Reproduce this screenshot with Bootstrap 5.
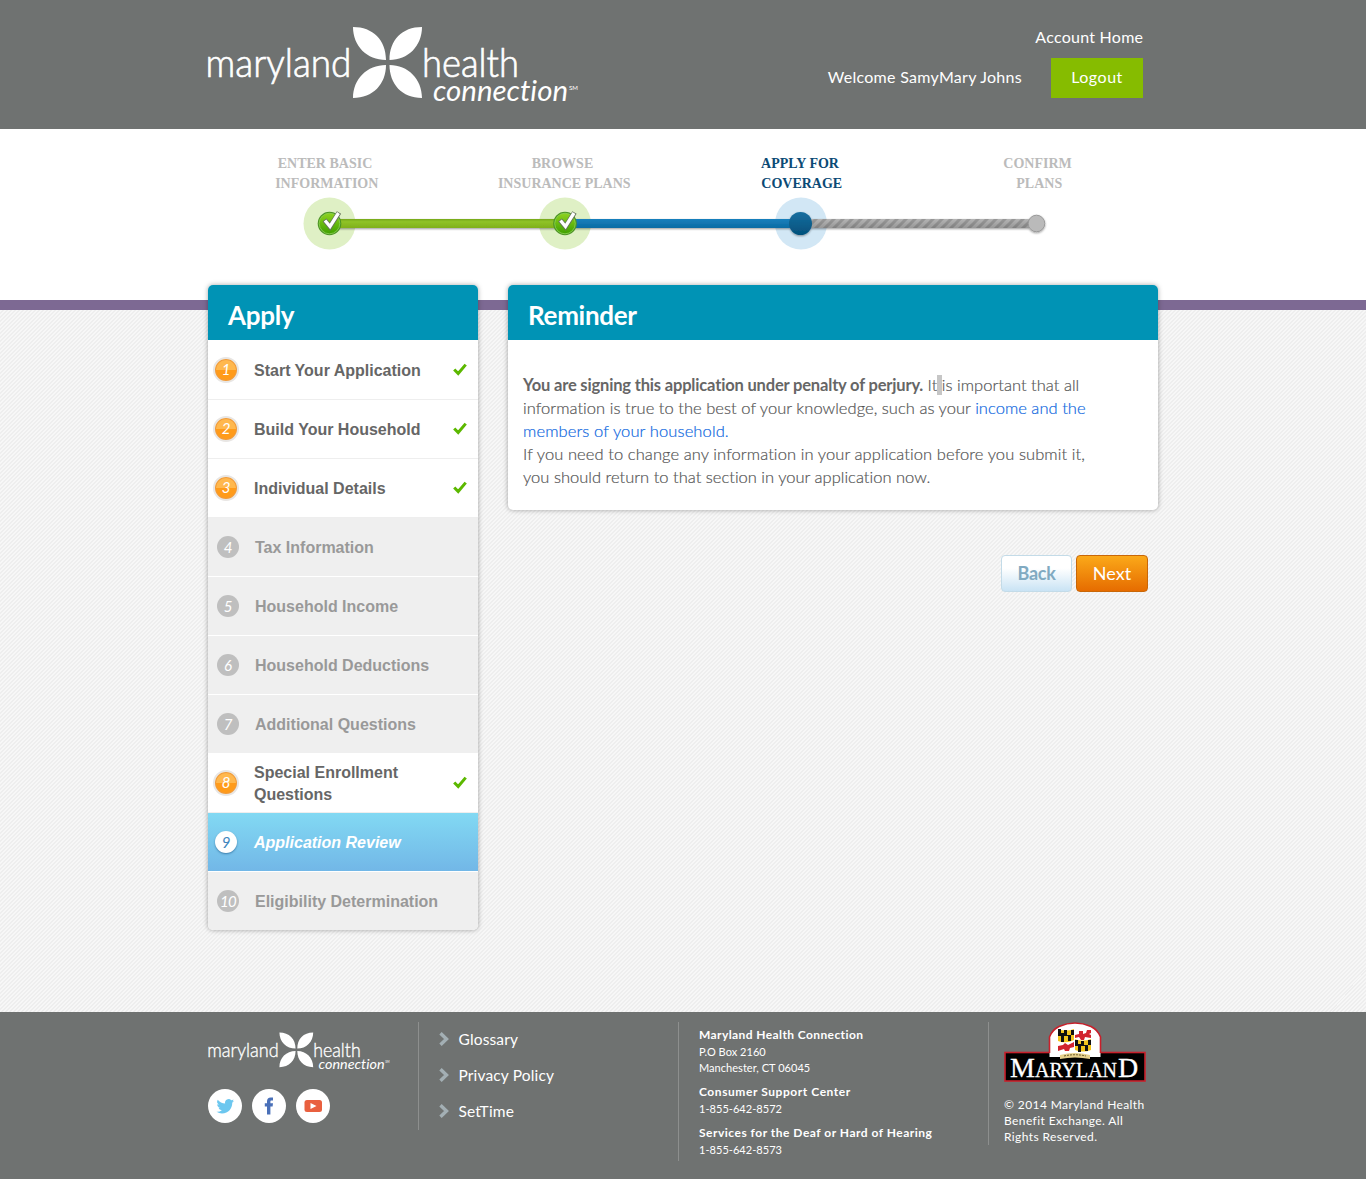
<!DOCTYPE html>
<html lang="en">
<head>
<meta charset="utf-8">
<meta name="viewport" content="width=device-width, initial-scale=1">
<title>Maryland Health Connection - Reminder</title>
<link href="https://cdn.jsdelivr.net/npm/bootstrap@5.3.0/dist/css/bootstrap.min.css" rel="stylesheet">
<style>
body{font-family:Lato,"Open Sans",sans-serif;color:#666;background:#fff;font-size:16px;font-variant-ligatures:none}
a{text-decoration:none}
.wrap{width:950px;margin:0 auto}
.site-head{background:#6f7271;height:129px;color:#fff}
.site-head a{color:#fff}
.brand{padding-top:20px}
.brand svg{margin-left:-5px}
.foot-brand{margin:-3px 0 -6px -2px}
.head-links{padding:25px 15px 0 0;line-height:24px}
.head-links .acct{letter-spacing:.25px;margin-right:-.25px}
.head-links .welcome{letter-spacing:.29px}
.head-user{gap:29px;margin-top:9px}
.head-user .welcome{margin-top:-2px}
.logout{background:#86bc00;width:92px;height:40px;line-height:38px;text-align:center;letter-spacing:.5px}
.steps{height:171px;padding-top:25px}
.steps svg{margin-top:-1px}
.step-label{font:bold 14px/20px "Liberation Serif",serif;color:#bbb;text-align:center}
.step-label.current{color:#0b4a75}
.page-main{border-top:10px solid #7d6993;height:712px;background:repeating-linear-gradient(-45deg,#eee 0 1.414px,#f7f7f7 1.414px 2.828px)}
.page-main>.wrap{margin-top:-25px;gap:30px}
.panel{border:0;border-radius:5px;box-shadow:0 0 5px rgba(0,0,0,.35);overflow:hidden}
.panel-title{background:#0093b5;color:#fff;height:55px;padding:11px 20px 0;font-size:26px;font-weight:700;line-height:39px;margin:0}
.t-apply,.t-rem{letter-spacing:-.3px}
.side{width:270px;background:#fff}
.nav-step{height:59px;border-bottom:1px solid #eee;background:#fff;color:#666;font:bold 16px/22px "Liberation Sans",sans-serif;padding-left:5px}
.nav-step:nth-of-type(1){height:60px;padding-top:1px}
.nav-step .txt{margin-left:15px;width:185px;padding-top:2px}
.nav-step svg.tick{margin:-1px 0 0 14px}
.nav-step.off{background:#efefef;border-color:#fff;color:#999;padding-left:9px}
.nav-step.off .txt{margin-left:16px}
.nav-step.off:last-child{border:0;height:58px}
.nav-step.now{background:linear-gradient(#82d9f3,#72b7e7);background-clip:padding-box;border-color:#fff;color:#fff;font-style:italic;padding-left:7px}
.nav-step.now .txt{margin-left:17px}
.num{flex:none;border-radius:50%;width:22px;height:22px;font:italic 400 15px/22px Lato,sans-serif;text-align:center;color:#fff;background:#bfbfbf;white-space:nowrap}
.num.wide{letter-spacing:-.8px}
.done .num{width:26px;height:26px;line-height:21px;border:2px solid #e8e6e4;box-shadow:inset 0 0 0 1px #f09a3c;background:linear-gradient(#ffb84e 50%,#ff9b1a 50%)}
.now .num{background:#fff;color:#3f86bd;box-shadow:0 1px 2px rgba(0,60,110,.5)}
.page-body{width:650px}
.notice{height:170px;padding:34px 15px 0;line-height:23px;font-size:16.500px;font-weight:300;color:#555}
.notice .ln{-webkit-text-stroke:.2px currentColor}
.notice b{color:#666;font-weight:700;letter-spacing:-.17px;-webkit-text-stroke:0}
.notice a{color:#0f68e0}
.ln{display:block;white-space:nowrap}
.l1{letter-spacing:.02px}
.l2{letter-spacing:.04px}
.l3{letter-spacing:.12px}
.l4{letter-spacing:.09px}
.l5{letter-spacing:.01px}
.selected{background:#c6c6c6}
.btn-step{height:37px;border-radius:4px;font-size:18px;line-height:34px;padding:0 0 1px;border:1px solid}
.btn-back{width:71px;background:linear-gradient(#fff 35%,#c9e3f4);border-color:#c3dbe8;color:#81aac1;font-weight:700;letter-spacing:-.3px}
.btn-next{width:72px;background:linear-gradient(#fba919,#e66c00);border-color:#c96708;color:#fff}
.page-actions{padding:45px 10px 0 0}
.site-foot{background:#6f7271;height:167px;color:#fff;padding-top:10px}
.site-foot a{color:#fff}
.f-col{border-left:1px solid #8d8f8e}
.f-brand{width:210px;padding-top:10px}
.f-social{gap:10px;padding-top:19px}
.f-links{width:260px;height:108px;padding-left:20px}
.f-links a{display:flex;align-items:center;height:36px;gap:9.500px;font-size:15.500px;letter-spacing:.15px}
.f-links a svg{margin-top:-2px}
.f-links span{padding-bottom:1px}
.contact{width:310px;height:139px;padding:4px 0 0 20px;font-size:11px;line-height:16px;letter-spacing:.04px}
.contact b{display:block;font-size:12px;line-height:18px;letter-spacing:.4px}
.contact .c2{letter-spacing:.56px}
.contact .c3{letter-spacing:.5px}
.contact div{margin-bottom:7px}
.f-state{width:170px;height:123px;padding-left:15px}
.copy{font-size:12px;line-height:16px;padding-top:15px;letter-spacing:.4px}
</style>
</head>
<body>
<svg width="0" height="0" class="position-absolute">
  <symbol id="tick" viewBox="0 0 14 13"><path d="M1.200 6.500L5.200 10.500L12.700 1.600" fill="none" stroke="#5cb800" stroke-width="3"/></symbol>
  <symbol id="chev" viewBox="0 0 10 14"><path d="M1.500 1.200L7.500 7L1.500 12.800" fill="none" stroke="#a3afb4" stroke-width="3.400"/></symbol>
</svg>

<header class="site-head">
  <div class="wrap d-flex justify-content-between">
    <a href="#" class="brand d-block" aria-label="Maryland Health Connection"><svg class="d-block" width="380" height="96" viewBox="203 20 380 96">
      <g id="logo" fill="#fff" font-family="Lato, sans-serif">
        <path d="M353 27C373 27 386 40 386 60C367 60 353 46 353 27ZM422 27C402 27 389.500 40 389.500 60C408 60 422 46 422 27ZM353 98C353 79 367 65 386 65C386 84 373 98 353 98ZM422 98C422 79 408 65 389.500 65C389.500 84 402 98 422 98Z"/>
        <g font-weight="300" stroke="#fff" stroke-width=".7">
          <text x="205.500" y="77" font-size="39" textLength="146" lengthAdjust="spacingAndGlyphs">maryland</text>
          <text x="422" y="77" font-size="39" textLength="97" lengthAdjust="spacingAndGlyphs">health</text>
        </g>
        <text x="433" y="101" font-size="29" font-style="italic" textLength="135" lengthAdjust="spacingAndGlyphs">connection</text>
        <text x="569" y="90" font-size="6" textLength="9" lengthAdjust="spacingAndGlyphs">SM</text>
      </g>
    </svg></a>
    <div class="head-links d-flex flex-column align-items-end">
      <a href="#" class="acct">Account Home</a>
      <div class="head-user d-flex align-items-center">
        <span class="welcome">Welcome SamyMary Johns</span>
        <a href="#" class="logout">Logout</a>
      </div>
    </div>
  </div>
</header>

<section class="steps">
  <div class="wrap">
    <div class="row g-0">
      <div class="col-3 step-label">ENTER BASIC&nbsp;<br>INFORMATION</div>
      <div class="col-3 step-label">BROWSE&nbsp;<br>INSURANCE PLANS</div>
      <div class="col-3 step-label current">APPLY FOR&nbsp;<br>COVERAGE</div>
      <div class="col-3 step-label">CONFIRM&nbsp;<br>PLANS</div>
    </div>
    <svg class="d-block" width="950" height="60" viewBox="208 193 950 60">
      <defs>
        <linearGradient id="g" x2="0" y2="1"><stop stop-color="#76a81a"/><stop offset=".3" stop-color="#8fc326"/><stop offset="1" stop-color="#7fb01c"/></linearGradient>
        <linearGradient id="b" x2="0" y2="1"><stop stop-color="#1580bd"/><stop offset="1" stop-color="#0f6ba3"/></linearGradient>
        <linearGradient id="d" x2="0" y2="1"><stop stop-color="#1a6fa0"/><stop offset="1" stop-color="#02507b"/></linearGradient>
        <linearGradient id="c" x2="0" y2="1"><stop stop-color="#8fd21f"/><stop offset="1" stop-color="#3fa000"/></linearGradient>
        <linearGradient id="s" x2="0" y2="1"><stop stop-opacity=".02"/><stop offset="1" stop-opacity=".18"/></linearGradient>
        <pattern id="h" width="9" height="9" patternUnits="userSpaceOnUse"><rect width="9" height="9" fill="#b8b8b8"/><path d="M-2 11L11 -2M-6.500 6.500L6.500 -6.500M2.500 15.500L15.500 2.500" stroke="#9c9c9c" stroke-width="3"/></pattern>
        <filter id="sh" x="-20%" y="-50%" width="140%" height="220%"><feDropShadow dx="0" dy="1" stdDeviation="1" flood-opacity=".4"/></filter>
        <g id="okdot"><circle r="11.800" fill="#4c9424"/><circle r="10.300" fill="url(#c)" stroke="#8fd456" stroke-width=".8"/><path d="M-5-3.500L.5 3L9.500-11" fill="none" stroke="#65735c" stroke-width="5"/><path d="M-4.500-3L.5 3L9-10.500" fill="none" stroke="#fff" stroke-width="3.300"/></g>
      </defs>
      <circle cx="329.500" cy="223.500" r="26" fill="#dff0c5"/><circle cx="565" cy="223.500" r="26" fill="#dff0c5"/><circle cx="801" cy="223.500" r="26" fill="#d2e7f5"/>
      <g filter="url(#sh)">
        <rect x="330" y="219" width="235" height="9" fill="url(#g)"/>
        <rect x="565" y="219" width="236" height="9" fill="url(#b)"/>
        <rect x="801" y="219" width="236" height="9" fill="url(#h)"/>
        <rect x="801" y="219" width="236" height="9" fill="url(#s)"/>
        <circle cx="800.500" cy="223.500" r="11.500" fill="url(#d)"/>
        <circle cx="1036.500" cy="223.500" r="8.300" fill="#bababa" stroke="#999"/>
      </g>
      <use href="#okdot" x="329.500" y="223.500"/><use href="#okdot" x="565" y="223.500"/>
    </svg>
  </div>
</section>

<main class="page-main">
  <div class="wrap d-flex align-items-start">
    <nav class="side panel">
      <h2 class="panel-title t-apply">Apply</h2>
      <div class="nav-step done d-flex align-items-center"><span class="num">1</span><span class="txt">Start Your Application</span><svg class="tick" width="14" height="13"><use href="#tick"/></svg></div>
      <div class="nav-step done d-flex align-items-center"><span class="num">2</span><span class="txt">Build Your Household</span><svg class="tick" width="14" height="13"><use href="#tick"/></svg></div>
      <div class="nav-step done d-flex align-items-center"><span class="num">3</span><span class="txt">Individual Details</span><svg class="tick" width="14" height="13"><use href="#tick"/></svg></div>
      <div class="nav-step off d-flex align-items-center"><span class="num">4</span><span class="txt">Tax Information</span></div>
      <div class="nav-step off d-flex align-items-center"><span class="num">5</span><span class="txt">Household Income</span></div>
      <div class="nav-step off d-flex align-items-center"><span class="num">6</span><span class="txt">Household Deductions</span></div>
      <div class="nav-step off d-flex align-items-center"><span class="num">7</span><span class="txt">Additional Questions</span></div>
      <div class="nav-step done d-flex align-items-center"><span class="num">8</span><span class="txt">Special Enrollment Questions</span><svg class="tick" width="14" height="13"><use href="#tick"/></svg></div>
      <div class="nav-step now d-flex align-items-center"><span class="num">9</span><span class="txt">Application Review</span></div>
      <div class="nav-step off d-flex align-items-center"><span class="num wide">10</span><span class="txt">Eligibility Determination</span></div>
    </nav>
    <div class="page-body">
      <div class="card panel">
        <h2 class="panel-title t-rem">Reminder</h2>
        <div class="notice">
          <span class="ln l1"><b>You are signing this application under penalty of perjury.</b> It<span class="selected"> </span>is important that all</span>
          <span class="ln l2">information is true to the best of your knowledge, such as your <a href="#">income and the</a></span>
          <span class="ln l3"><a href="#">members of your household.</a></span>
          <span class="ln l4">If you need to change any information in your application before you submit it,</span>
          <span class="ln l5">you should return to that section in your application now.</span>
        </div>
      </div>
      <div class="page-actions d-flex justify-content-end gap-1">
        <button class="btn btn-step btn-back">Back</button>
        <button class="btn btn-step btn-next">Next</button>
      </div>
    </div>
  </div>
</main>

<footer class="site-foot">
  <div class="wrap d-flex align-items-start">
    <div class="f-brand">
      <svg class="foot-brand d-block" width="186" height="47" viewBox="203 20 380 96"><use href="#logo"/></svg>
      <div class="f-social d-flex">
        <svg width="34" height="34"><circle cx="17" cy="17" r="17" fill="#fff"/><path transform="translate(8.500 8.500) scale(.73)" fill="#6cc7ef" d="M24 4.560a9.800 9.800 0 0 1-2.830.77 4.930 4.930 0 0 0 2.170-2.720 9.900 9.900 0 0 1-3.130 1.190 4.920 4.920 0 0 0-8.380 4.490A13.980 13.980 0 0 1 1.670 3.150a4.930 4.930 0 0 0 1.520 6.570 4.900 4.900 0 0 1-2.230-.61v.06a4.920 4.920 0 0 0 3.950 4.830 5 5 0 0 1-2.220.08 4.930 4.930 0 0 0 4.600 3.420A9.870 9.870 0 0 1 0 19.540a13.940 13.940 0 0 0 7.550 2.210c9.050 0 14-7.500 14-14v-.63A10 10 0 0 0 24 4.560Z"/></svg>
        <svg width="34" height="34"><circle cx="17" cy="17" r="17" fill="#fff"/><path fill="#4a70b8" d="M15 25.500V17.500H12.800V14.300H15V12.300C15 9.800 16.400 8.500 18.700 8.500H21V11.600H19.500C18.700 11.600 18.400 12 18.400 12.700V14.300H21L20.600 17.500H18.400V25.500Z"/></svg>
        <svg width="34" height="34"><circle cx="17" cy="17" r="17" fill="#fff"/><rect x="8.500" y="11" width="17.500" height="12" rx="2.500" fill="#e9603f"/><path d="M14.500 14L20.500 17L14.500 20Z" fill="#fff"/></svg>
      </div>
    </div>
    <div class="f-col f-links">
      <a href="#"><svg width="10" height="14"><use href="#chev"/></svg><span>Glossary</span></a>
      <a href="#"><svg width="10" height="14"><use href="#chev"/></svg><span>Privacy Policy</span></a>
      <a href="#"><svg width="10" height="14"><use href="#chev"/></svg><span>SetTime</span></a>
    </div>
    <div class="f-col contact">
      <div><b class="c1">Maryland Health Connection</b>P.O Box 2160<br>Manchester, CT 06045</div>
      <div><b class="c2">Consumer Support Center</b>1-855-642-8572</div>
      <div><b class="c3">Services for the Deaf or Hard of Hearing</b>1-855-642-8573</div>
    </div>
    <div class="f-col f-state">
      <svg class="d-block" width="142" height="60" viewBox="0 0 142 60">
        <rect x="1" y="30.500" width="140" height="28.500" fill="#000" stroke="#c8202b" stroke-width="1.600"/>
        <path d="M45.500 35V15Q48 8 55 4.500Q71-2.500 87 4.500Q94 8 96.500 15V35Z" fill="#fff"/>
        <path d="M45.500 31V15Q48 8 55 4.500Q71-2.500 87 4.500Q94 8 96.500 15V31" fill="none" stroke="#c8202b" stroke-width="1.600"/>
        <path d="M54 7Q62 10 70 7V19Q62 22 54 19Z" fill="#f3c51b"/><path d="M54 7h3v4h3V8h3v5h4V8h3v5h-3v6h-3v-5h-4v6h-3v-6h-3Z" fill="#111"/>
        <path d="M71 17Q79 20 87 17V28Q79 31 71 28Z" fill="#f3c51b"/><path d="M71 18h3v4h3v-3h3v4h4v-5h3v5h-3v6h-3v-5h-4v6h-3v-6h-3Z" fill="#111"/>
        <path d="M71 8Q79 10 87 7V16Q79 20 71 17Z" fill="#fff"/><path d="M71 13l4-1v-3h4v3l3-1 1-3h4v3l-2 1 2 1v3l-6-1-1 3h-3l-2-3-4 1Z" fill="#d2232e"/>
        <path d="M54 20Q62 22 70 18V28Q62 31 54 29Z" fill="#fff"/><path d="M54 24l5-1 2-2 3 2 6-3v5l-4 1-1 3h-4l-1-2-6 2Z" fill="#d2232e"/>
        <path d="M56 33Q71 29 86 33V37Q71 34 56 37Z" fill="#e6d08c"/><path d="M60 34Q71 31.500 82 34" stroke="#6a5a2b" fill="none" stroke-dasharray="2 1"/>
        <text y="54.500" fill="#fff" stroke="#fff" stroke-width=".3" font-family="Liberation Serif, serif"><tspan x="6" font-size="28">M</tspan><tspan x="31" font-size="22" textLength="82" lengthAdjust="spacingAndGlyphs">ARYLAN</tspan><tspan x="114" font-size="28">D</tspan></text>
      </svg>
      <div class="copy">© 2014 Maryland Health<br>Benefit Exchange. All<br>Rights Reserved.</div>
    </div>
  </div>
</footer>
<script src="https://cdn.jsdelivr.net/npm/bootstrap@5.3.0/dist/js/bootstrap.bundle.min.js"></script>
</body>
</html>
